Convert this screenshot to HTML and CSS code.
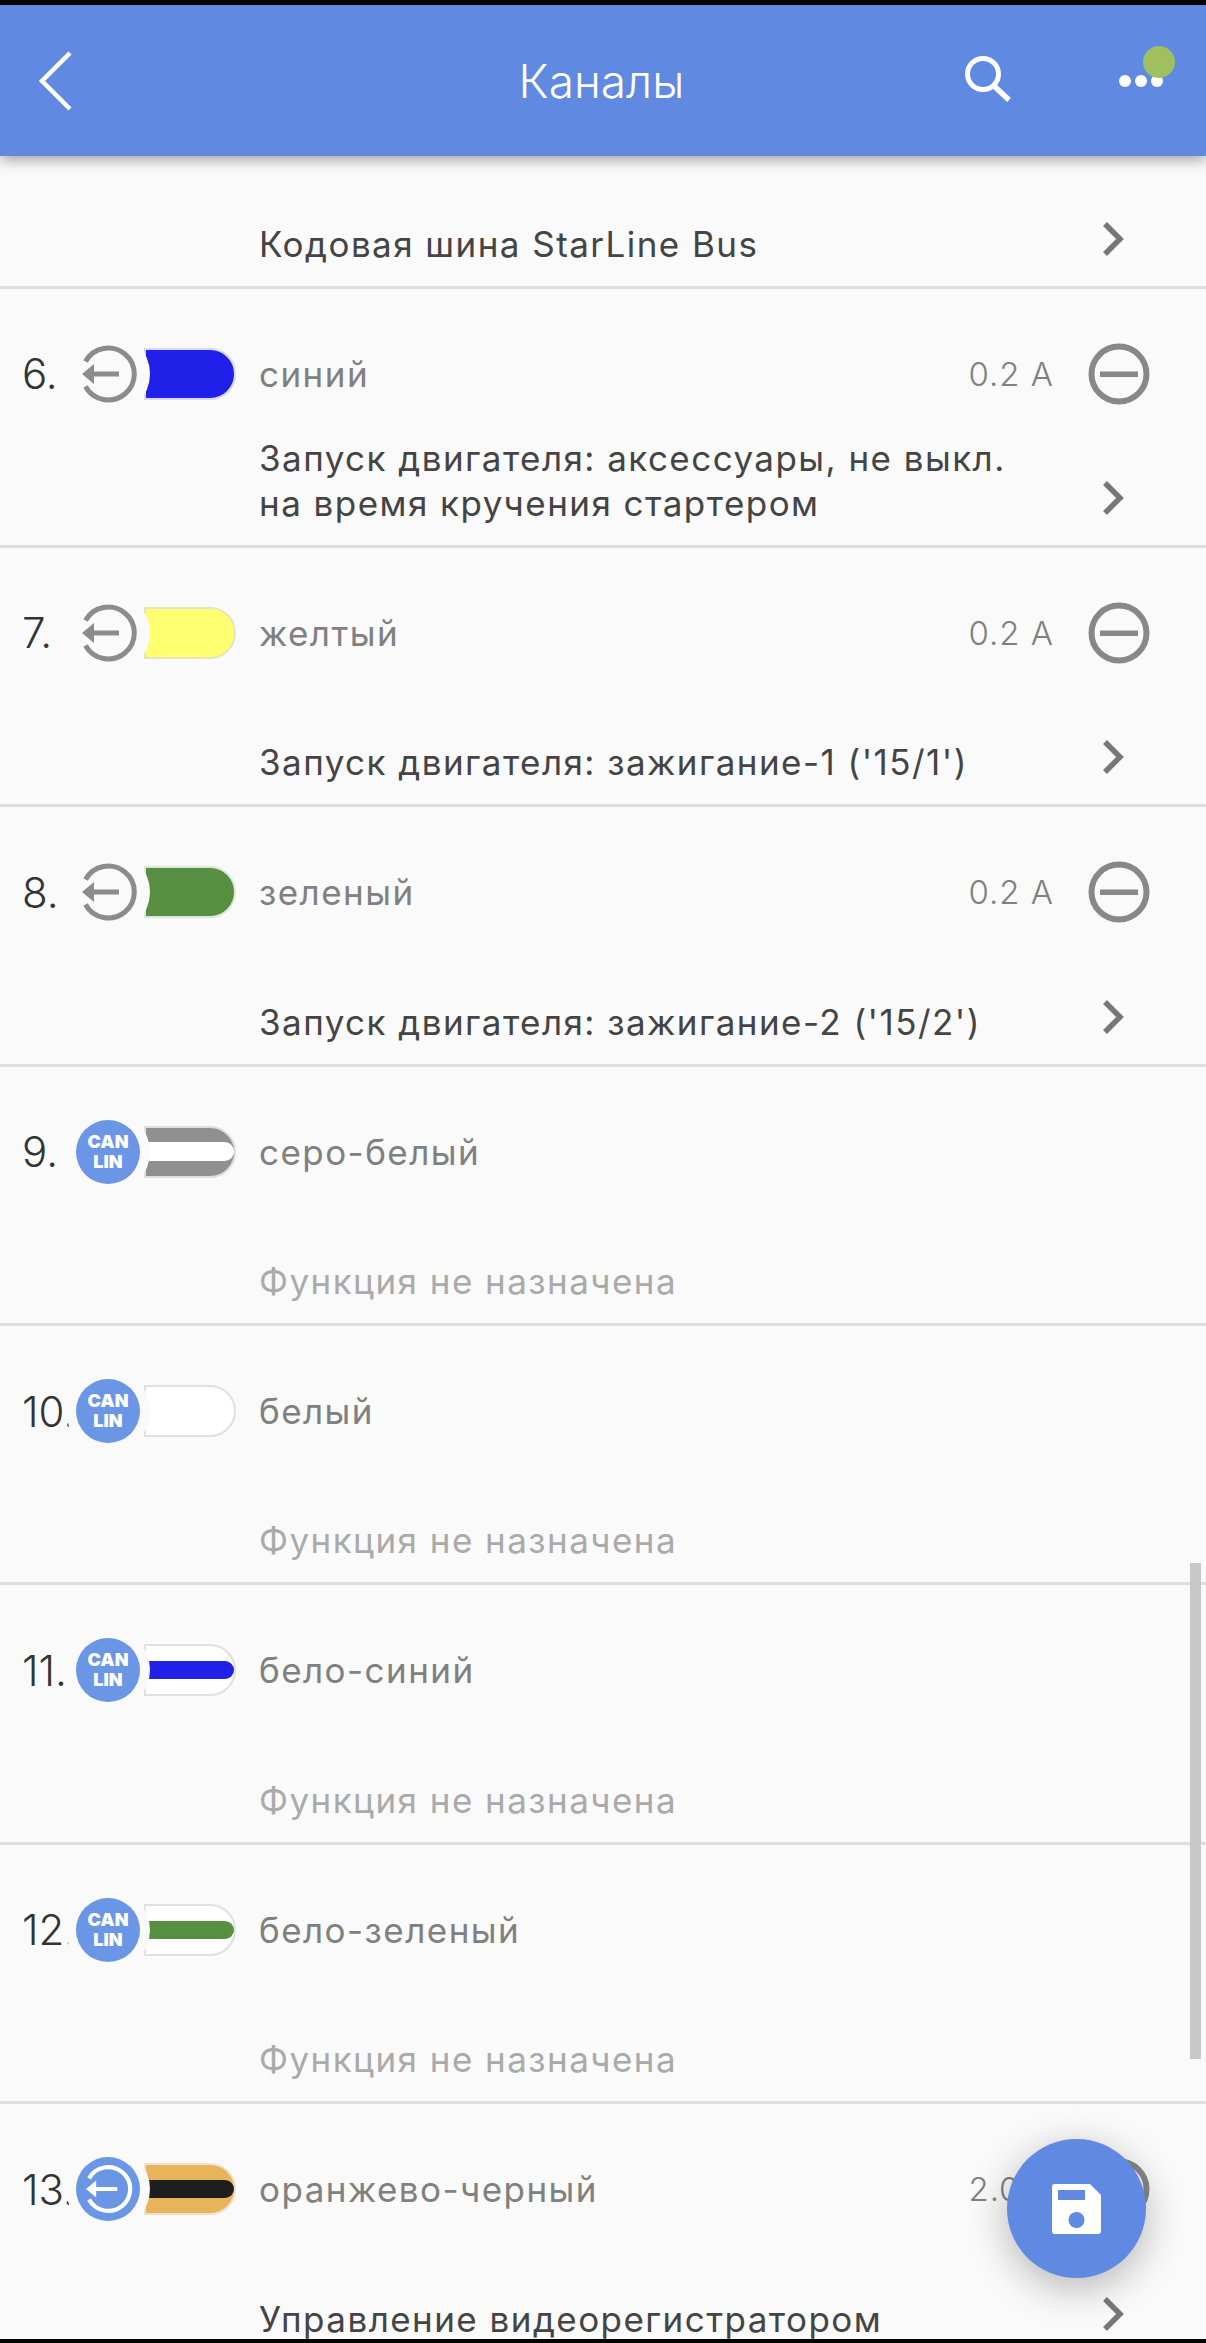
FILE: index.html
```html
<!DOCTYPE html>
<html>
<head>
    <meta charset="UTF-8">
    <title>Каналы</title>
    <link rel="stylesheet" href="styles.css">
</head>
<body>
    <svg class="defs" width="0" height="0">
        <symbol id="ic-out" viewBox="0 0 64 64">
            <path d="M9.5 19.5A26 26 0 1 1 9.5 44.5" fill="none" stroke="currentColor" stroke-width="5"/>
            <path d="M6 32L18 22V29.5H43V34.5H18V42Z" fill="currentColor"/>
        </symbol>
        <symbol id="ic-minus" viewBox="0 0 64 64">
            <circle cx="32" cy="32" r="27.5" fill="none" stroke="currentColor" stroke-width="6"/>
            <rect x="13" y="29.5" width="38" height="5.5" fill="currentColor"/>
        </symbol>
        <symbol id="ic-chev" viewBox="0 0 24 36">
            <path d="M4 3L19 18L4 33" fill="none" stroke="currentColor" stroke-width="5.5"/>
        </symbol>
    </svg>

    <div class="topbar"></div>
    <header class="header">
        <svg class="back" viewBox="0 0 36 60"><path d="M33 2L5 30L33 58" fill="none" stroke="#fff" stroke-width="4.5"/></svg>
        <h1 class="title">Каналы</h1>
        <svg class="search" viewBox="0 0 48 48"><circle cx="19" cy="19" r="15.5" fill="none" stroke="#fff" stroke-width="5"/><path d="M29 30L45 45" stroke="#fff" stroke-width="5.5"/></svg>
        <div class="more">
            <span class="dot"></span><span class="dot"></span><span class="dot"></span>
            <span class="status"></span>
        </div>
    </header>

    <main class="list">
        <section class="row row-cut">
            <div class="bottom">
                <p class="func">Кодовая шина StarLine Bus</p>
                <svg class="chev"><use href="#ic-chev"/></svg>
            </div>
        </section>

        <section class="row">
            <div class="top">
                <span class="num">6.</span>
                <span class="badge"><svg class="out"><use href="#ic-out"/></svg></span>
                <span class="wire w-blue"></span>
                <span class="name">синий</span>
                <span class="amps">0.2 A</span>
                <svg class="minus"><use href="#ic-minus"/></svg>
            </div>
            <div class="bottom">
                <p class="func">Запуск двигателя: аксессуары, не выкл.<br>на время кручения стартером</p>
                <svg class="chev"><use href="#ic-chev"/></svg>
            </div>
        </section>

        <section class="row">
            <div class="top">
                <span class="num">7.</span>
                <span class="badge"><svg class="out"><use href="#ic-out"/></svg></span>
                <span class="wire w-yellow"></span>
                <span class="name">желтый</span>
                <span class="amps">0.2 A</span>
                <svg class="minus"><use href="#ic-minus"/></svg>
            </div>
            <div class="bottom">
                <p class="func">Запуск двигателя: зажигание-1 ('15/1')</p>
                <svg class="chev"><use href="#ic-chev"/></svg>
            </div>
        </section>

        <section class="row">
            <div class="top">
                <span class="num">8.</span>
                <span class="badge"><svg class="out"><use href="#ic-out"/></svg></span>
                <span class="wire w-green"></span>
                <span class="name">зеленый</span>
                <span class="amps">0.2 A</span>
                <svg class="minus"><use href="#ic-minus"/></svg>
            </div>
            <div class="bottom">
                <p class="func">Запуск двигателя: зажигание-2 ('15/2')</p>
                <svg class="chev"><use href="#ic-chev"/></svg>
            </div>
        </section>

        <section class="row">
            <div class="top">
                <span class="num">9.</span>
                <span class="badge"><span class="can">CAN<br>LIN</span></span>
                <span class="wire w-gray"><i class="stripe s-white"></i></span>
                <span class="name">серо-белый</span>
            </div>
            <div class="bottom">
                <p class="func none">Функция не назначена</p>
            </div>
        </section>

        <section class="row">
            <div class="top">
                <span class="num">10.</span>
                <span class="badge"><span class="can">CAN<br>LIN</span></span>
                <span class="wire w-white"></span>
                <span class="name">белый</span>
            </div>
            <div class="bottom">
                <p class="func none">Функция не назначена</p>
            </div>
        </section>

        <section class="row">
            <div class="top">
                <span class="num">11.</span>
                <span class="badge"><span class="can">CAN<br>LIN</span></span>
                <span class="wire w-white"><i class="stripe s-blue"></i></span>
                <span class="name">бело-синий</span>
            </div>
            <div class="bottom">
                <p class="func none">Функция не назначена</p>
            </div>
        </section>

        <section class="row">
            <div class="top">
                <span class="num">12.</span>
                <span class="badge"><span class="can">CAN<br>LIN</span></span>
                <span class="wire w-white"><i class="stripe s-green"></i></span>
                <span class="name">бело-зеленый</span>
            </div>
            <div class="bottom">
                <p class="func none">Функция не назначена</p>
            </div>
        </section>

        <section class="row">
            <div class="top">
                <span class="num">13.</span>
                <span class="badge"><span class="can"><svg class="out out-w"><use href="#ic-out"/></svg></span></span>
                <span class="wire w-orange"><i class="stripe s-black"></i></span>
                <span class="name">оранжево-черный</span>
                <span class="amps">2.0 A</span>
                <svg class="minus"><use href="#ic-minus"/></svg>
            </div>
            <div class="bottom">
                <p class="func">Управление видеорегистратором</p>
                <svg class="chev"><use href="#ic-chev"/></svg>
            </div>
        </section>
    </main>

    <div class="scrollbar"></div>

    <button class="fab" type="button">
        <svg viewBox="0 0 49 50" width="49" height="50">
            <path d="M3 0H38L49 11V47Q49 50 46 50H3Q0 50 0 47V3Q0 0 3 0Z" fill="#fff"/>
            <rect x="6" y="6" width="27" height="10" fill="#6089e2"/>
            <ellipse cx="24.5" cy="36" rx="8" ry="8" fill="#6089e2"/>
        </svg>
    </button>

    <div class="bottombar"></div>
</body>
</html>
```

FILE: styles.css
```css
* {
    box-sizing: border-box;
}

html, body {
    height: 100%;
}

body {
    margin: 0;
    height: 2343px;
    overflow: hidden;
    position: relative;
    display: flex;
    flex-direction: column;
    background-color: #fafafa;
    font-family: Inter, "Noto Sans", sans-serif;
}

.defs {
    position: absolute;
}

.topbar {
    height: 5px;
    background-color: #000;
    flex: none;
}

.bottombar {
    height: 4px;
    background-color: #000;
    flex: none;
    position: relative;
    z-index: 5;
}

/* header */
.header {
    height: 151px;
    flex: none;
    position: relative;
    z-index: 3;
    display: flex;
    align-items: flex-start;
    background-color: #6089e2;
    box-shadow: 0 3px 14px rgba(0, 0, 0, 0.4);
}

.back {
    width: 36px;
    height: 60px;
    margin: 46px 0 0 37px;
    flex: none;
}

.title {
    margin: 0;
    padding-right: 3px;
    position: absolute;
    left: 0;
    right: 0;
    top: 51px;
    text-align: center;
    font-size: 46px;
    line-height: 50px;
    font-weight: 300;
    color: #fff;
}

.search {
    width: 48px;
    height: 48px;
    margin: 50px 0 0 auto;
    flex: none;
}

.more {
    width: 44px;
    margin: 70px 43px 0 107px;
    display: flex;
    justify-content: space-between;
    position: relative;
}

.dot {
    width: 12px;
    height: 12px;
    border-radius: 50%;
    background-color: #fff;
}

.status {
    position: absolute;
    left: 24px;
    top: -29px;
    width: 32px;
    height: 32px;
    border-radius: 50%;
    background-color: #a0c060;
}

/* rows */
.list {
    flex: 1;
    overflow: hidden;
}

.row {
    height: 259.4px;
    padding: 43px 55px 19px 22px;
    border-bottom: 3px solid #dedede;
    display: flex;
    flex-direction: column;
    justify-content: space-between;
}

.row-cut {
    height: 132.5px;
    justify-content: flex-end;
}

.top {
    height: 84px;
    display: flex;
    align-items: center;
}

.num {
    width: 44px;
    flex: none;
    white-space: nowrap;
    font-size: 42px;
    font-weight: 300;
    color: #333;
}

.badge {
    width: 84px;
    height: 84px;
    flex: none;
    position: relative;
    z-index: 1;
    border-radius: 50%;
    background-color: #fafafa;
    display: flex;
    align-items: center;
    justify-content: center;
    color: #8c8c8c;
}

.out {
    width: 64px;
    height: 64px;
}

.out-w {
    width: 54px;
    height: 54px;
    color: #fff;
}

.can {
    width: 64px;
    height: 64px;
    border-radius: 50%;
    background-color: #6b96e6;
    display: flex;
    align-items: center;
    justify-content: center;
    text-align: center;
    color: #fff;
    font-size: 18px;
    line-height: 20px;
    font-weight: 900;
}

.wire {
    width: 92px;
    height: 52px;
    margin-left: -6px;
    flex: none;
    border-radius: 0 26px 26px 0;
    border: 2px solid;
    display: flex;
    align-items: center;
}

.stripe {
    display: block;
    width: 100%;
    border-radius: 0 10px 10px 0;
}

.w-blue { background-color: #2020e8; border-color: #d8d8fa; }
.w-yellow { background-color: #ffff70; border-color: #e4e4c0; }
.w-green { background-color: #558f3f; border-color: #dde6da; }
.w-gray { background-color: #909090; border-color: #dedede; }
.w-white { background-color: #fff; border-color: #e0e0e0; }
.w-orange { background-color: #e8b45a; border-color: #eee0cc; }

.s-white { height: 19px; background-color: #fff; }
.s-blue { height: 18px; background-color: #2020e8; }
.s-green { height: 18px; background-color: #558f3f; }
.s-black { height: 18px; background-color: #1e1e1e; }

.name {
    margin-left: 23px;
    flex: 1;
    font-size: 35px;
    letter-spacing: 1.45px;
    color: #808080;
}

.amps {
    margin-right: 33px;
    font-size: 33px;
    letter-spacing: 1px;
    font-weight: 300;
    color: #808080;
}

.minus {
    width: 64px;
    height: 64px;
    flex: none;
    color: #888;
}

.bottom {
    margin-left: 237px;
    display: flex;
    align-items: flex-end;
    justify-content: space-between;
}

.func {
    margin: 0;
    font-size: 35px;
    line-height: 45px;
    letter-spacing: 1.45px;
    color: #444;
}

.func.none {
    color: #aaaaaa;
}

.chev {
    width: 24px;
    height: 36px;
    margin: 0 26px 10px 0;
    flex: none;
    color: #777;
}

/* overlays */
.scrollbar {
    position: absolute;
    left: 1190px;
    top: 1563px;
    width: 11px;
    height: 496px;
    background-color: #c8c8c8;
}

.fab {
    position: absolute;
    left: 1007px;
    top: 2139px;
    width: 139px;
    height: 139px;
    padding: 0;
    border: none;
    border-radius: 50%;
    background-color: #6089e2;
    box-shadow: 0 10px 40px rgba(0, 0, 0, 0.28);
    display: flex;
    align-items: center;
    justify-content: center;
    z-index: 4;
}
```
